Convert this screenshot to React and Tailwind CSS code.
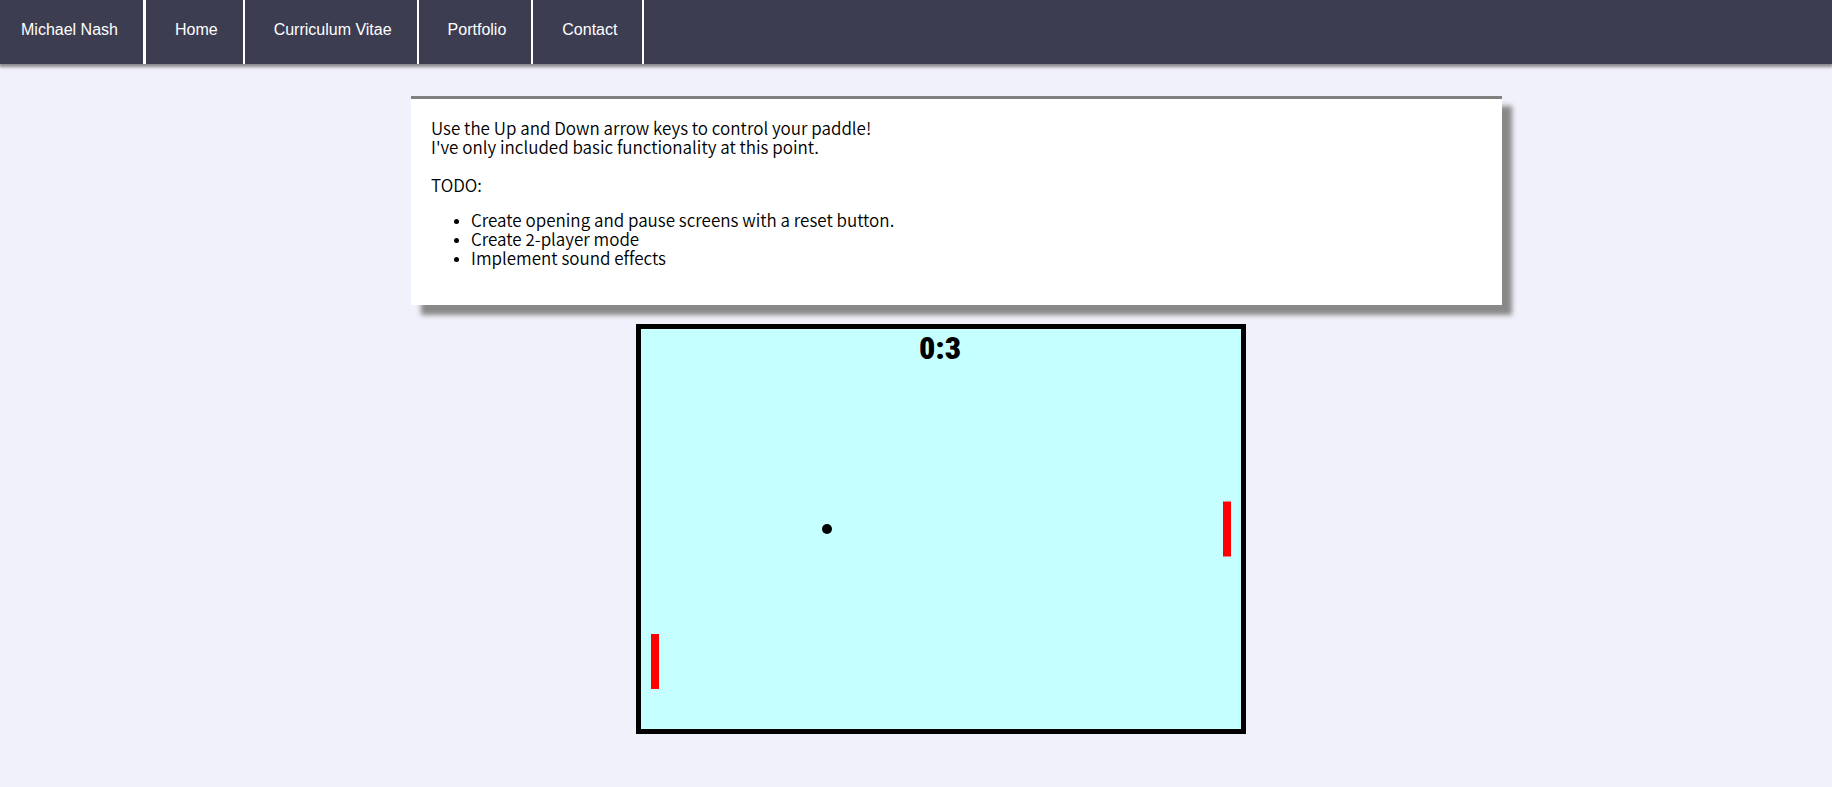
const links = ['Home', 'Curriculum Vitae', 'Portfolio', 'Contact'];

const todos = [
  'Create opening and pause screens with a reset button.',
  'Create 2-player mode',
  'Implement sound effects',
];

function NavBar() {
  return (
    <nav className="flex h-16 bg-[#3d3d52] font-['Liberation_Sans',Arial,sans-serif] text-base leading-5 text-white shadow-[0_2px_3px_1px_#888888]">
      <a href="#top" className="border-r-3 border-white pt-5 pr-[25px] pl-[21px]">
        Michael Nash
      </a>
      {links.map((label) => (
        <a key={label} href="#top" className="border-r-2 border-white pt-5 pr-[25px] pl-[29px]">
          {label}
        </a>
      ))}
    </nav>
  );
}

function Notes() {
  return (
    <section className="mx-auto w-full max-w-[1091px] border-t-3 border-[#808080] bg-white px-5 pt-[19px] pb-[38px] shadow-[10px_10px_5px_#888888]">
      <p>
        Use the Up and Down arrow keys to control your paddle!
        <br />
        I've only included basic functionality at this point.
      </p>
      <p className="mt-[19px]">TODO:</p>
      <ul className="mt-4 list-disc pl-10 marker:text-[13px]">
        {todos.map((todo) => (
          <li key={todo}>{todo}</li>
        ))}
      </ul>
    </section>
  );
}

function Pong() {
  return (
    <svg
      viewBox="0 0 600 400"
      role="img"
      aria-label="Pong"
      className="mx-auto box-content block w-full max-w-[600px] border-5 border-black bg-[#c5ffff]"
    >
      <text
        x="299"
        y="30"
        textAnchor="middle"
        className="font-['Impact','Roboto_Condensed',sans-serif] text-[32px] font-black"
      >
        0:3
      </text>
      <rect x="10" y="305" width="8" height="55" fill="#ff0000" />
      <rect x="582" y="172.5" width="8" height="55" fill="#ff0000" />
      <circle cx="186" cy="200" r="5" />
    </svg>
  );
}

export default function App() {
  return (
    <div className="min-h-screen bg-[#f1f1fb] pb-12 font-['Noto_Sans_CJK_SC',sans-serif] text-[17px] leading-[19px] font-[350] text-black [font-variant-ligatures:none]">
      <NavBar />
      <main>
        <div className="pt-8 pl-[81px]">
          <Notes />
        </div>
        <div className="pt-[19px] pl-[50px]">
          <Pong />
        </div>
      </main>
    </div>
  );
}
